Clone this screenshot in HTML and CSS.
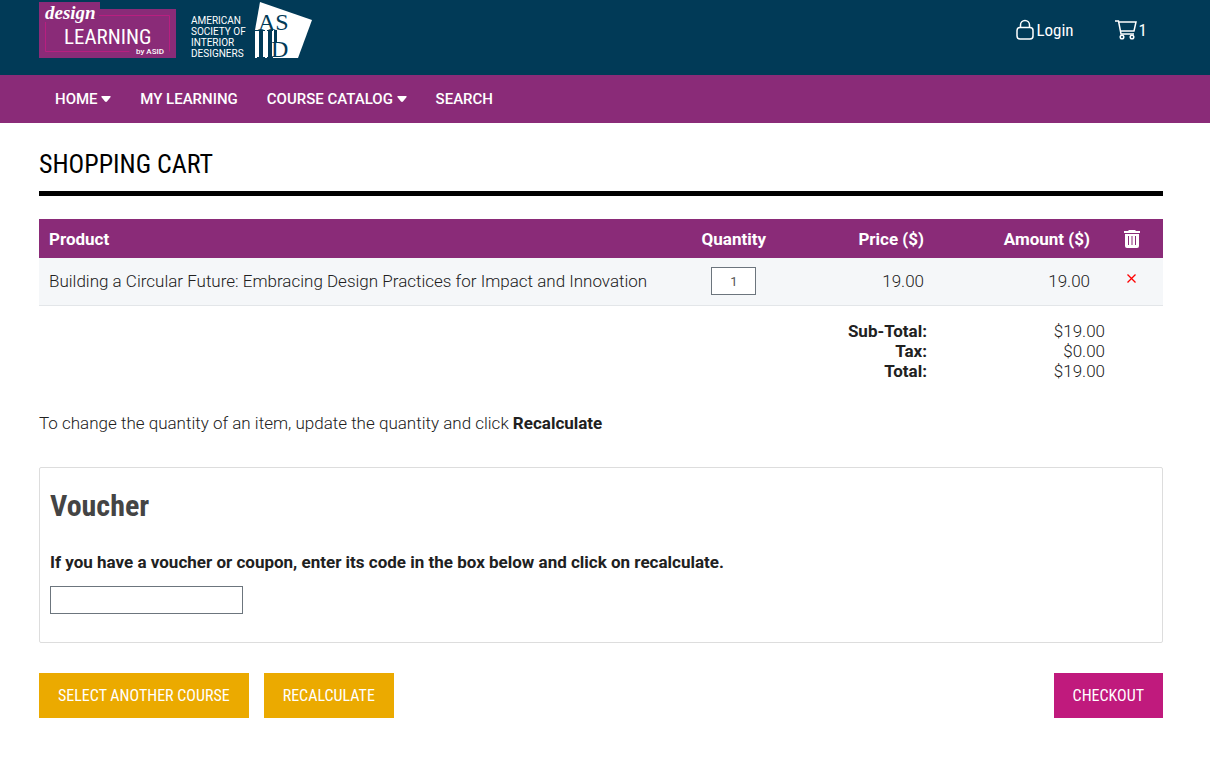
FILE: index.html
```html
<!DOCTYPE html>
<html lang="en">
<head>
    <meta charset="UTF-8" />
    <meta name="viewport" content="width=device-width, initial-scale=1" />
    <title>Shopping Cart</title>
    <link rel="stylesheet" href="styles.css">
</head>
<body>
<header class="header">
    <a class="logo" href="#" aria-label="Design Learning by ASID">
        <svg width="273" height="60" viewBox="0 0 273 60">
            <path fill="#8a2b78" d="M0 2h61v7h76v49H0z"/>
            <path fill="none" stroke="#b81f80" d="M60 15.500h70.500v36M6.500 22v29.500h84"/>
            <text class="logo-script" x="6" y="19">design</text>
            <text class="logo-name" x="25" y="44">LEARNING</text>
            <text class="logo-by" x="97" y="54">by ASID</text>
            <g class="logo-society">
                <text x="152" y="24">AMERICAN</text>
                <text x="152" y="35">SOCIETY OF</text>
                <text x="152" y="46">INTERIOR</text>
                <text x="152" y="57">DESIGNERS</text>
            </g>
            <path fill="#fff" d="M221 2l52 18-14 38h-43V30z"/>
            <text class="logo-mark" x="219" y="30">AS</text>
            <text class="logo-mark" x="232" y="57">D</text>
            <!-- long stems under the A and above the D -->
            <path fill="#013a57" d="M215 30h11v1h-2v26h2v1h-8v-1h2V31h-5zM228 30h6v1h-1v26h1v1h-6v-1h1V31h-1zM235 30h3v12h-3z"/>
        </svg>
    </a>
    <div class="account">
        <a class="account-link" href="#">
            <svg width="18" height="22" viewBox="0 0 18 22" fill="none" stroke="#fff" stroke-width="1.500">
                <rect x="1" y="8.500" width="16" height="11.500" rx="3"/>
                <path d="M4.500 8.500V6a4.500 4.500 0 0 1 9 0v2.500"/>
            </svg>
            <span>Login</span>
        </a>
        <a class="account-link" href="#" aria-label="Cart, 1 item">
            <svg width="22" height="22" viewBox="0 0 22 22" fill="none" stroke="#fff" stroke-width="1.500">
                <path d="M0 2h3.500l2.500 13h13M4 3h17l-2 9H5.500"/>
                <circle cx="7" cy="18" r="1.800"/>
                <circle cx="17" cy="18" r="1.800"/>
            </svg>
            <span>1</span>
        </a>
    </div>
</header>

<nav class="nav">
    <a href="#">HOME <svg class="caret" width="10" height="6" viewBox="0 0 10 6"><path fill="#fff" d="M1 0h8q1 0 .600 1L6 5.600q-1 .800-2 0L.400 1Q0 0 1 0z"/></svg></a>
    <a href="#">MY LEARNING</a>
    <a href="#">COURSE CATALOG <svg class="caret" width="10" height="6" viewBox="0 0 10 6"><path fill="#fff" d="M1 0h8q1 0 .600 1L6 5.600q-1 .800-2 0L.400 1Q0 0 1 0z"/></svg></a>
    <a href="#">SEARCH</a>
</nav>

<main class="content">
    <h1 class="title">SHOPPING CART</h1>
    <form action="#">
        <table class="cart">
            <thead>
                <tr>
                    <th>Product</th>
                    <th class="quantity">Quantity</th>
                    <th class="price">Price ($)</th>
                    <th class="amount">Amount ($)</th>
                    <th class="remove">
                        <svg width="16" height="18" viewBox="0 0 16 18" role="img" aria-label="Remove">
                            <path fill="#fff" fill-rule="evenodd" d="M5 0h6l1 1h4v2H0V1h4zM1 4h14v12q0 2-2 2H3q-2 0-2-2zM4 6v9h1V6zM7.500 6v9h1V6zM11 6v9h1V6z"/>
                        </svg>
                    </th>
                </tr>
            </thead>
            <tbody>
                <tr>
                    <td>Building a Circular Future: Embracing Design Practices for Impact and Innovation</td>
                    <td class="quantity"><input class="field" type="text" value="1" aria-label="Quantity"></td>
                    <td class="price">19.00</td>
                    <td class="amount">19.00</td>
                    <td class="remove">
                        <button class="delete" type="button" aria-label="Remove item">
                            <svg width="9" height="9" viewBox="0 0 9 9"><path stroke="#f00" stroke-width="1.300" d="M.500.500l8 8M8.500.500l-8 8"/></svg>
                        </button>
                    </td>
                </tr>
            </tbody>
        </table>

        <table class="totals">
            <tr><th>Sub-Total:</th><td>$19.00</td></tr>
            <tr><th>Tax:</th><td>$0.00</td></tr>
            <tr><th>Total:</th><td>$19.00</td></tr>
        </table>

        <p class="hint">To change the quantity of an item, update the quantity and click <b>Recalculate</b></p>

        <section class="voucher">
            <h2>Voucher</h2>
            <label for="voucher">If you have a voucher or coupon, enter its code in the box below and click on recalculate.</label>
            <input class="field" type="text" id="voucher">
        </section>

        <div class="buttons">
            <button class="btn" type="button">SELECT ANOTHER COURSE</button>
            <button class="btn" type="button">RECALCULATE</button>
            <button class="btn checkout" type="submit">CHECKOUT</button>
        </div>
    </form>
</main>
</body>
</html>
```
FILE: styles.css
```css
*{
    margin: 0;
    padding: 0;
    box-sizing: border-box;
}
body{
    font: 300 17px/20px Roboto, sans-serif;
    color: #212121;
    background-color: #fff;
}
a{
    color: #fff;
    text-decoration: none;
}
svg{
    display: block;
    overflow: visible;
}
.header{
    display: flex;
    justify-content: space-between;
    align-items: flex-start;
    height: 75px;
    padding: 0 63px 0 39px;
    background-color: #013a57;
}
.logo text{
    fill: #fff;
}
.logo .logo-script{
    font: italic 700 19px "Liberation Serif", serif;
}
.logo .logo-name{
    font: 400 21px "Roboto Condensed", "Liberation Sans Narrow", Roboto, sans-serif;
}
.logo .logo-by{
    font: 500 8px Roboto, sans-serif;
}
.logo-society{
    font: 400 10px Roboto, sans-serif;
}
.logo .logo-mark{
    font: 400 24px "Liberation Serif", serif;
    fill: #013a57;
}
.account{
    display: flex;
    gap: 41px;
    padding-top: 19px;
}
.account-link{
    display: flex;
    align-items: center;
    gap: 2px;
    font: 400 17px/22px "Roboto Condensed", "Liberation Sans Narrow", Roboto, sans-serif;
}
.nav{
    display: flex;
    align-items: center;
    gap: 29px;
    height: 48px;
    padding: 0 55px;
    font-size: 15px;
    font-weight: 500;
    background-color: #8a2b78;
}
.caret{
    display: inline-block;
    vertical-align: 2px;
}
.content{
    padding: 20px 47px 40px 39px;
}
.title{
    padding-bottom: 6px;
    border-bottom: 5px solid #000;
    font: 400 26px/42px "Roboto Condensed", "Liberation Sans Narrow", Roboto, sans-serif;
    color: #000;
}
.cart{
    width: 100%;
    margin-top: 23px;
    border-collapse: collapse;
}
.cart th{
    height: 39px;
    padding: 0 10px;
    font-weight: 700;
    text-align: left;
    color: #fff;
    background-color: #8a2b78;
}
.cart td{
    height: 47px;
    padding: 0 10px;
    border-bottom: 1px solid #e3e6e9;
    background-color: #f5f7f9;
}
.cart .quantity{
    width: 84px;
    text-align: center;
}
.cart .price{
    width: 158px;
    text-align: right;
}
.cart .amount{
    width: 166px;
    text-align: right;
}
.cart .remove{
    width: 63px;
}
.remove svg{
    margin: 0 auto;
}
.field{
    width: 193px;
    height: 28px;
    padding: 0 5px;
    border: 1px solid #6c757d;
    font: 400 13px/20px Roboto, sans-serif;
    color: #555;
    background-color: #fff;
}
.quantity .field{
    width: 45px;
    text-align: center;
}
.delete{
    display: block;
    width: 100%;
    padding-bottom: 6px;
    border: 0;
    background: none;
}
.totals{
    margin: 15px 58px 0 auto;
    border-collapse: collapse;
    text-align: right;
}
.totals th{
    font-weight: 700;
}
.totals td{
    width: 178px;
}
.hint{
    margin-top: 32px;
}
b{
    font-weight: 700;
}
.voucher{
    margin-top: 34px;
    padding: 18px 10px 28px;
    border: 1px solid #ddd;
    border-radius: 2px;
}
.voucher h2{
    font: 700 30px/40px "Roboto Condensed", "Liberation Sans Narrow", Roboto, sans-serif;
    color: #444;
}
.voucher label{
    display: block;
    margin: 26px 0 14px;
    font-weight: 700;
}
.voucher .field{
    display: block;
}
.buttons{
    display: flex;
    gap: 15px;
    margin-top: 30px;
}
.btn{
    padding: 0 19px;
    border: 0;
    font: 400 16px/45px "Roboto Condensed", "Liberation Sans Narrow", Roboto, sans-serif;
    color: #fff;
    background-color: #ebaa00;
    cursor: pointer;
}
.checkout{
    margin-left: auto;
    background-color: #c01a7d;
}
```
